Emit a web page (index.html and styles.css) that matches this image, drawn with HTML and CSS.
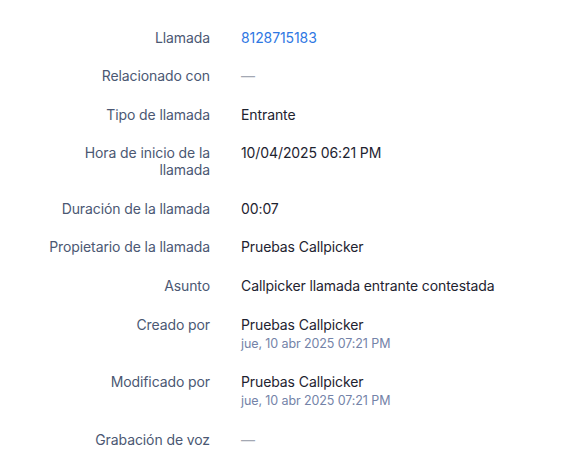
FILE: index.html
```html
<!DOCTYPE html>
<html lang="es">
<head>
    <meta charset="UTF-8">
    <meta name="viewport" content="width=device-width, initial-scale=1.0">
    <title>Detalles de la llamada</title>
    <link rel="stylesheet" href="styles.css">
</head>
<body>
    <div class="details">
        <div class="row">
            <div class="label">Llamada</div>
            <div class="value"><a class="link" href="#">8128715183</a></div>
        </div>
        <div class="row">
            <div class="label">Relacionado con</div>
            <div class="value empty">—</div>
        </div>
        <div class="row">
            <div class="label">Tipo de llamada</div>
            <div class="value">Entrante</div>
        </div>
        <div class="row">
            <div class="label">Hora de inicio de la llamada</div>
            <div class="value">10/04/2025 06:21 PM</div>
        </div>
        <div class="row">
            <div class="label">Duración de la llamada</div>
            <div class="value">00:07</div>
        </div>
        <div class="row">
            <div class="label">Propietario de la llamada</div>
            <div class="value">Pruebas Callpicker</div>
        </div>
        <div class="row">
            <div class="label">Asunto</div>
            <div class="value">Callpicker llamada entrante contestada</div>
        </div>
        <div class="row">
            <div class="label">Creado por</div>
            <div class="value">
                Pruebas Callpicker
                <div class="sub">jue, 10 abr 2025 07:21 PM</div>
            </div>
        </div>
        <div class="row">
            <div class="label">Modificado por</div>
            <div class="value">
                Pruebas Callpicker
                <div class="sub">jue, 10 abr 2025 07:21 PM</div>
            </div>
        </div>
        <div class="row">
            <div class="label">Grabación de voz</div>
            <div class="value empty">—</div>
        </div>
    </div>
</body>
</html>
```

FILE: styles.css
```css
body, html {
    margin: 0;
    padding: 0;
    background-color: #ffffff;
    font-family: Inter, "Noto Sans", sans-serif;
    font-size: 14px;
    line-height: 17px;
    letter-spacing: -0.1px;
}
.details {
    display: flex;
    flex-direction: column;
    gap: 21.6px;
    padding: 28.5px 0 0 40px;
}
.row {
    display: grid;
    grid-template-columns: 170px 1fr;
    column-gap: 31px;
}
.label {
    text-align: right;
    color: #4b5873;
}
.value {
    color: #1e2330;
}
.link {
    color: #2f78e3;
    text-decoration: none;
}
.empty {
    color: #a3a8b3;
}
.sub {
    margin-top: 2px;
    font-size: 12.5px;
    line-height: 17px;
    color: #7483a8;
}
```
